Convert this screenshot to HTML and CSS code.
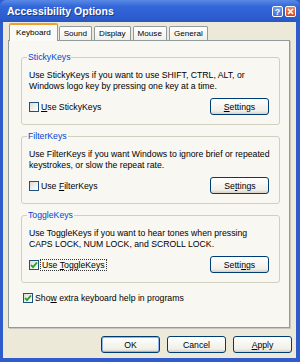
FILE: index.html
```html
<!DOCTYPE html>
<html lang="en">
<head>
    <meta charset="UTF-8">
    <title>Accessibility Options</title>
    <link rel="stylesheet" href="styles.css">
</head>
<body>
<div class="window">
    <div class="titlebar">
        <span class="title">Accessibility Options</span>
        <div class="caption-btns">
            <span class="cbtn help">?</span>
            <span class="cbtn close">
                <svg width="7" height="7" viewBox="0 0 7 7"><path d="M1 1L6 6M6 1L1 6" stroke="#fff" stroke-width="1.6"/></svg>
            </span>
        </div>
    </div>
    <div class="dialog">
        <ul class="tabs">
            <li class="tab active">Keyboard</li>
            <li class="tab">Sound</li>
            <li class="tab">Display</li>
            <li class="tab">Mouse</li>
            <li class="tab">General</li>
        </ul>
        <div class="panel">
            <fieldset class="group">
                <legend>StickyKeys</legend>
                <p>Use StickyKeys if you want to use SHIFT, CTRL, ALT, or<br>Windows logo key by pressing one key at a time.</p>
                <div class="row">
                    <label class="check"><span class="box"></span><span><u>U</u>se StickyKeys</span></label>
                    <button class="btn" type="button"><u>S</u>ettings</button>
                </div>
            </fieldset>
            <fieldset class="group">
                <legend>FilterKeys</legend>
                <p>Use FilterKeys if you want Windows to ignore brief or repeated<br>keystrokes, or slow the repeat rate.</p>
                <div class="row">
                    <label class="check"><span class="box"></span><span>Use <u>F</u>ilterKeys</span></label>
                    <button class="btn" type="button">Se<u>t</u>tings</button>
                </div>
            </fieldset>
            <fieldset class="group">
                <legend>ToggleKeys</legend>
                <p>Use ToggleKeys if you want to hear tones when pressing<br>CAPS LOCK, NUM LOCK, and SCROLL LOCK.</p>
                <div class="row">
                    <label class="check"><span class="box checked"><svg width="8" height="8" viewBox="0 0 8 8"><path d="M1 4L3 6.2L7 1.5" fill="none" stroke="#21a121" stroke-width="1.8"/></svg></span><span class="focus">Use <u>T</u>oggleKeys</span></label>
                    <button class="btn" type="button">Setti<u>n</u>gs</button>
                </div>
            </fieldset>
            <label class="check extra"><span class="box checked"><svg width="8" height="8" viewBox="0 0 8 8"><path d="M1 4L3 6.2L7 1.5" fill="none" stroke="#21a121" stroke-width="1.8"/></svg></span><span>Sho<u>w</u> extra keyboard help in programs</span></label>
        </div>
        <div class="actions">
            <button class="btn default" type="button">OK</button>
            <button class="btn" type="button">Cancel</button>
            <button class="btn" type="button"><u>A</u>pply</button>
        </div>
    </div>
</div>
</body>
</html>
```

FILE: styles.css
```css
body {
    margin: 0;
    padding: 0;
    font-family: "Liberation Sans", Arial, sans-serif;
    font-size: 8.7px;
    color: #000;
}
.window {
    width: 300px;
    height: 362px;
    box-sizing: border-box;
    display: flex;
    flex-direction: column;
    background-color: #2f5bcc;
    padding: 0 4px 4px 3px;
}
.titlebar {
    height: 22px;
    margin: 0 -4px 0 -3px;
    padding: 0 4px 0 7px;
    display: flex;
    align-items: center;
    justify-content: space-between;
    background: linear-gradient(#5a8ae6, #3366d8 30%, #2d5fd2 70%, #2a56c4);
    border-radius: 6px 6px 0 0;
}
.title {
    color: white;
    font-weight: bold;
    font-size: 10.5px;
    text-shadow: 1px 1px 0 #1a3a8a;
}
.caption-btns {
    display: flex;
    gap: 2px;
    margin-top: 1px;
}
.cbtn {
    width: 11px;
    height: 11px;
    box-sizing: border-box;
    border: 1px solid #fff;
    border-radius: 2px;
    display: flex;
    align-items: center;
    justify-content: center;
    color: white;
    font-weight: bold;
    font-size: 9px;
}
.help {
    background: linear-gradient(#6e9af0, #3e6fe0);
}
.close {
    background: linear-gradient(#ee8a5e, #d8481c);
}
.dialog {
    flex: 1;
    background-color: #ece9d8;
    display: flex;
    flex-direction: column;
    padding: 1px 6px 5px 5px;
}
.tabs {
    list-style-type: none;
    margin: 0;
    padding: 0 0 0 1px;
    display: flex;
    align-items: flex-end;
    height: 17px;
    position: relative;
    z-index: 1;
    font-size: 8.1px;
}
.tab {
    height: 13px;
    line-height: 13px;
    padding: 0 4px;
    margin-right: 2px;
    border: 1px solid #919b9c;
    border-bottom: none;
    border-radius: 2px 2px 0 0;
    background: linear-gradient(#ffffff, #f1f0ea);
}
.tab.active {
    height: 16px;
    line-height: 15px;
    padding: 0 6px;
    margin-right: 1px;
    margin-bottom: -1px;
    border-top: 2px solid #f0a030;
    background: #fafaf6;
}
.panel {
    flex: 1;
    background-color: #f8f7f2;
    border: 1px solid #919b9c;
    box-shadow: 1px 1px 0 #c8c6bc;
    padding: 11px 9px 0 12px;
}
.group {
    margin: 0 0 6px 0;
    padding: 0 10px 9px 7px;
    border: 1px solid #d0d0bf;
    border-radius: 3px;
}
.group legend {
    color: #0046d5;
    padding: 0 1px;
    margin-left: -2px;
    line-height: 11px;
}
.group p {
    margin: 7px 0 0 0;
    line-height: 11px;
    white-space: nowrap;
}
.row {
    display: flex;
    justify-content: space-between;
    align-items: center;
    margin-top: 6px;
}
.check {
    display: flex;
    align-items: center;
    gap: 2px;
}
.box {
    width: 10px;
    height: 10px;
    box-sizing: border-box;
    border: 1px solid #1c5180;
    background: linear-gradient(135deg, #dcdcd6, #ffffff);
    display: flex;
    align-items: center;
    justify-content: center;
}
.focus {
    outline: 1px dotted #333;
    outline-offset: 0;
    padding: 0 1px;
}
.extra {
    margin: 10px 0 0 2px;
}
.btn {
    font-family: inherit;
    font-size: 8.7px;
    width: 59px;
    height: 17px;
    padding: 0;
    border: 1px solid #003c74;
    border-radius: 3px;
    background: linear-gradient(#ffffff, #f0efe8 80%, #d6d0c5);
    color: #000;
}
.btn.default {
    box-shadow: inset 0 0 0 1px #90b4f0;
}
.actions {
    display: flex;
    justify-content: flex-end;
    gap: 7px;
    margin: 8px -2px 0 0;
}
```
